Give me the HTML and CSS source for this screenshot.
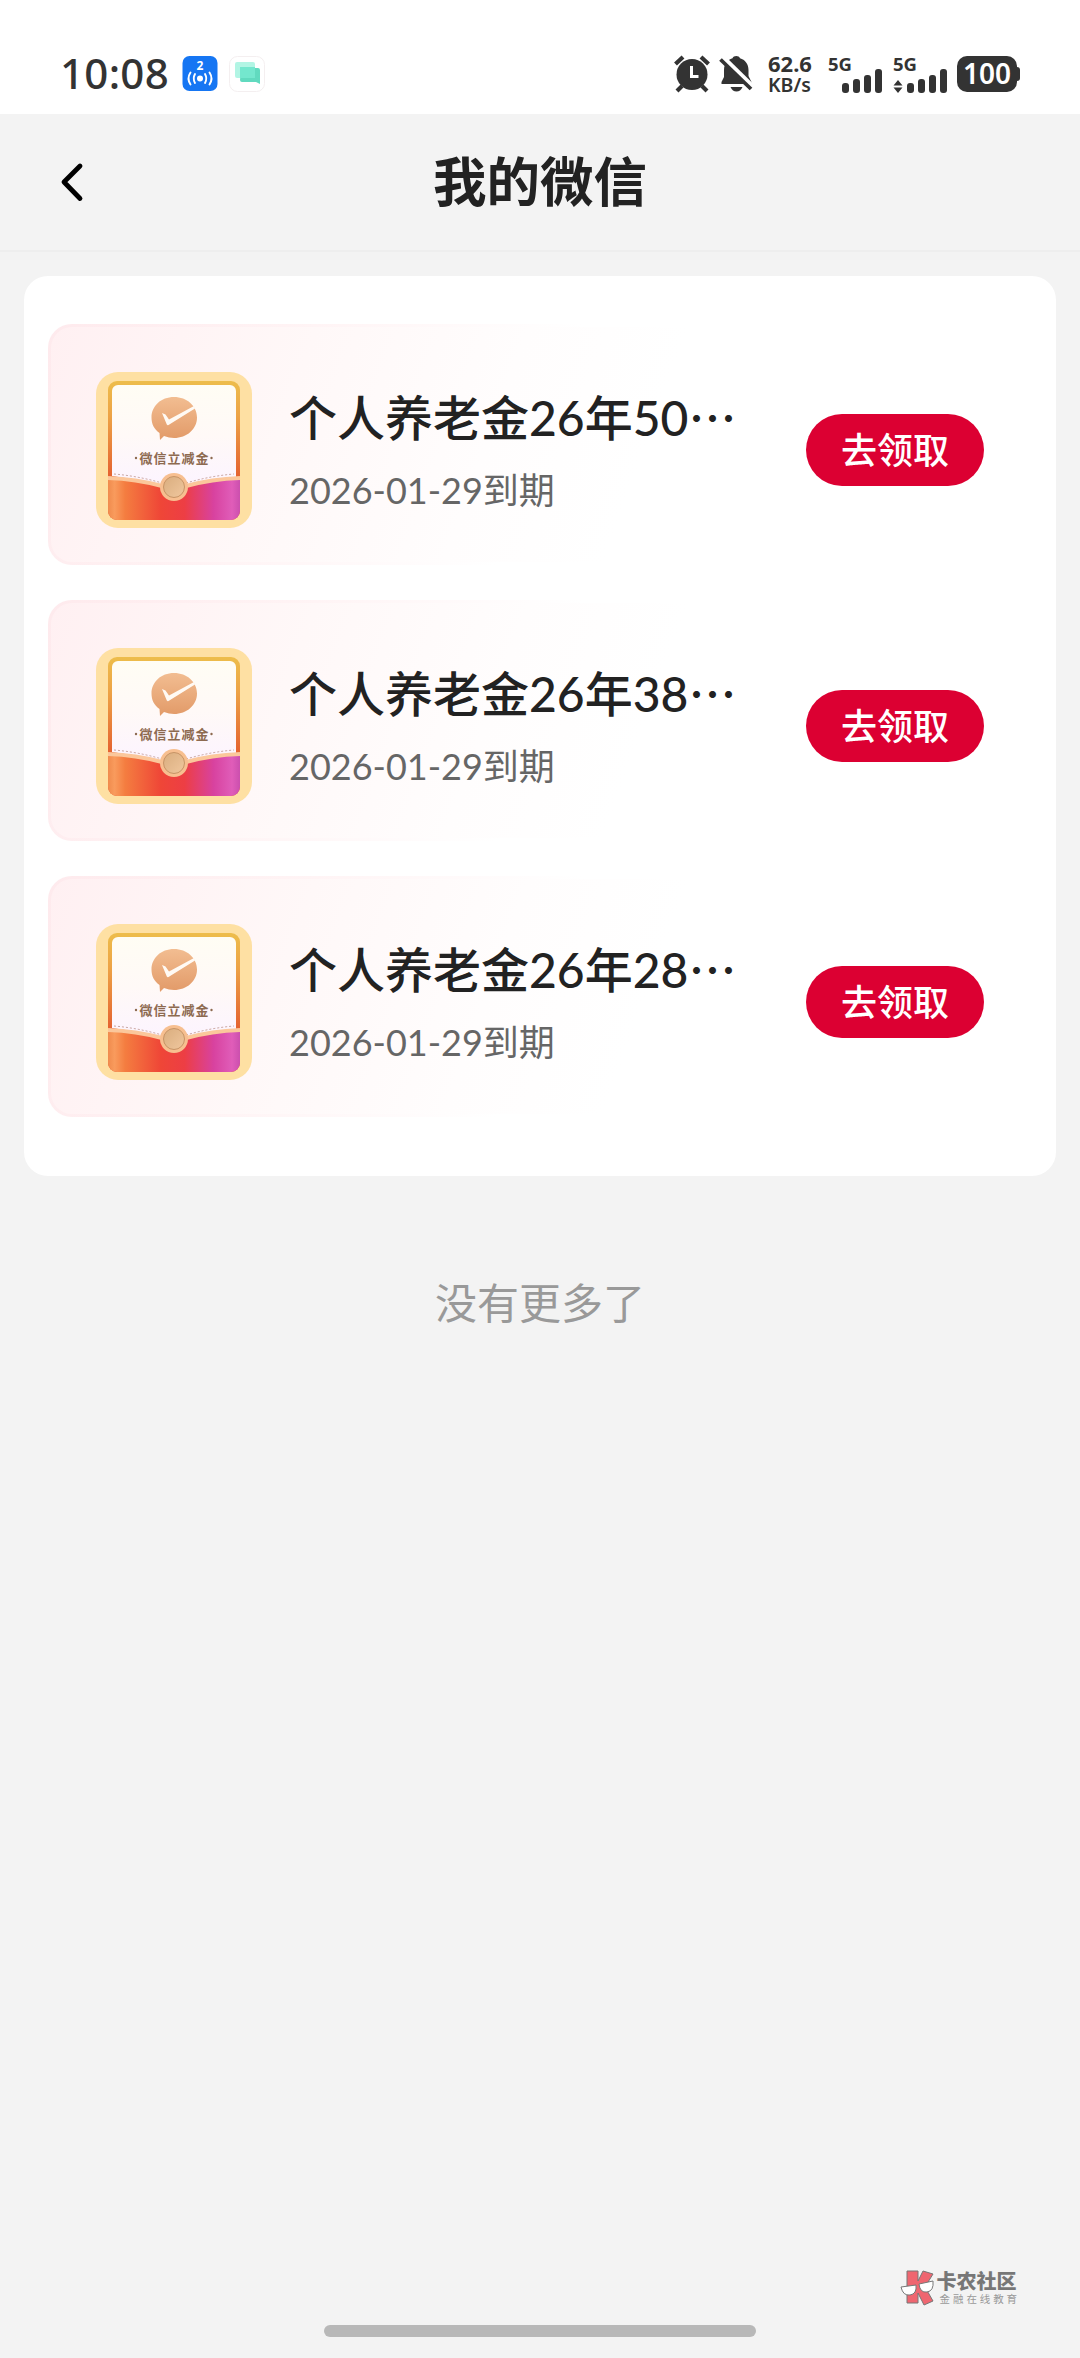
FILE: index.html
```html
<!DOCTYPE html>
<html lang="zh-CN">
<head>
<meta charset="utf-8">
<title>我的微信</title>
<link rel="stylesheet" href="styles.css">
</head>
<body>
<svg class="defs" width="0" height="0" aria-hidden="true">
  <defs>
    <linearGradient id="frame" x1="0" y1="0" x2="0" y2="1">
      <stop offset="0" stop-color="#edbd4b"/><stop offset=".25" stop-color="#eda346"/><stop offset=".7" stop-color="#e4602f"/><stop offset="1" stop-color="#e4502f"/>
    </linearGradient>
    <linearGradient id="paper" x1="0" y1="0" x2="0" y2="1">
      <stop offset="0" stop-color="#fffdf4"/><stop offset=".5" stop-color="#fff9f7"/><stop offset="1" stop-color="#fcf4ff"/>
    </linearGradient>
    <linearGradient id="pocket" x1="0" y1="0" x2="1" y2="0">
      <stop offset="0" stop-color="#f08b4d"/><stop offset=".05" stop-color="#f99b5d"/><stop offset=".13" stop-color="#f47d40"/><stop offset=".4" stop-color="#ef4637"/><stop offset=".58" stop-color="#ed3e44"/><stop offset=".8" stop-color="#d8429f"/><stop offset=".94" stop-color="#e05db9"/><stop offset="1" stop-color="#cb4fae"/>
    </linearGradient>
    <linearGradient id="bubble" x1="0" y1="0" x2="0" y2="1">
      <stop offset="0" stop-color="#f2bd91"/><stop offset="1" stop-color="#e29a68"/>
    </linearGradient>
    <linearGradient id="seal" x1="0" y1="0" x2="1" y2="1">
      <stop offset="0" stop-color="#d9ad7e"/><stop offset="1" stop-color="#f0c79e"/>
    </linearGradient>
    <symbol id="coupon" viewBox="0 0 156 156">
      <rect width="156" height="156" rx="22" fill="#fee0a3"/>
      <rect x="12" y="9" width="132" height="139" rx="9" fill="url(#frame)"/>
      <path d="M12 107H144V139a9 9 0 0 1-9 9H21a9 9 0 0 1-9-9z" fill="url(#pocket)"/>
      <path d="M16 19a6 6 0 0 1 6-6H134a6 6 0 0 1 6 6V105Q110 109 90 114H66Q45 108 16 104z" fill="url(#paper)"/>
      <path d="M12 106Q40 107 66 114M90 114Q116 107 144 106" fill="none" stroke="#fbc79b" stroke-width="4"/>
      <path d="M18 102Q42 104 66 111M90 111Q114 104 138 102" fill="none" stroke="#b98b83" stroke-width=".8" stroke-dasharray="2 2"/>
      <path d="M78 25c13 0 23 9 23 20.500S91 66 78 66q-5 0-10-2l-4 4-.5-7C58 57 55.500 52 55.500 45.500 55.500 34 65 25 78 25z" fill="url(#bubble)"/>
      <path d="M66 41l3.500 1.500 3.500 5L98 34l1 2.500L72.500 53q-1 .5-1.700-.6z" fill="#fffaf4"/>
      <circle cx="78" cy="115" r="14" fill="#f7bf90"/>
      <circle cx="78" cy="115" r="10.500" fill="url(#seal)" stroke="#c79466" stroke-width="1"/>
      <circle cx="40" cy="86" r="1.200" fill="#8d6a50"/><circle cx="115.500" cy="86" r="1.200" fill="#8d6a50"/>
      <text x="43.500" y="90.500" textLength="69" class="coupon-label">微信立减金</text>
    </symbol>
  </defs>
</svg>

<div class="status">
  <div class="status-left">
    <span class="clock">10:08</span>
    <svg class="app-icon" viewBox="0 0 36 36" width="36" height="36">
      <rect x=".5" width="35" height="35" rx="7" fill="#1676f3"/>
      <text x="18" y="13.500" text-anchor="middle" class="badge-num">2</text>
      <circle cx="18" cy="22.500" r="3" fill="#fff"/>
      <g fill="none" stroke="#fff" stroke-width="1.900" stroke-linecap="round">
        <path d="M13 18q-2.500 4.500 0 9M23 18q2.500 4.500 0 9M8.500 16.500q-4 6 0 12M27.500 16.500q4 6 0 12"/>
      </g>
    </svg>
    <svg class="app-icon chat" viewBox="0 0 36 36" width="36" height="36">
      <rect x=".5" y=".5" width="35" height="35" rx="8" fill="#fff" stroke="#f4eff0"/>
      <path d="M12 12h17q2 0 2 2v14l-4-2H13q-2 0-2-2z" fill="#61dabf"/>
      <rect x="6" y="6" width="20" height="16" rx="2" fill="#a4f3df" opacity=".85"/>
      <rect x="11" y="11" width="15" height="11" fill="#74e7ce"/>
    </svg>
  </div>
  <div class="status-right">
    <svg class="alarm" viewBox="0 0 38 40" width="38" height="40">
      <g fill="none" stroke="#333" stroke-width="4.200">
        <path d="M2.500 10L10 3M28 3l7.500 7"/><path d="M9 32l-5 5M29 32l5 5"/>
      </g>
      <circle cx="19" cy="20.500" r="15.500" fill="#333"/>
      <path d="M18.500 12v10.500h7" fill="none" stroke="#fff" stroke-width="3"/>
    </svg>
    <svg class="bell" viewBox="0 0 34 38" width="34" height="38">
      <path d="M2.500 29V27l2.500-5V15C5 8 10 4 13.500 3.200 14.500.3 20 .3 21 3.200 26 4.500 29.500 9 29.500 15v6l3 6v2z" fill="#333"/>
      <path d="M11.500 32H23.500Q21.500 36.500 17.500 36.500T11.500 32z" fill="#333"/>
      <path d="M4 2.500L34 32" stroke="#fff" stroke-width="5"/>
      <path d="M1.500 4.500L32 34" stroke="#333" stroke-width="3.800"/>
    </svg>
    <div class="speed"><span>62.6</span><span>KB/s</span></div>
    <div class="signal">
      <span class="net">5G</span>
      <svg viewBox="0 0 56 27" width="56" height="27" fill="#333">
        <rect x="14" y="15" width="7" height="10" rx="3"/><rect x="25" y="11" width="7" height="14" rx="3"/><rect x="36" y="7" width="7" height="18" rx="3"/><rect x="47" y="1" width="7" height="24" rx="3"/>
      </svg>
    </div>
    <div class="signal second">
      <span class="net">5G</span>
      <svg viewBox="0 0 56 27" width="56" height="27" fill="#333">
        <path d="M.5 17.500L5 12l4.500 5.500zM.5 19.500L5 25l4.500-5.500z"/>
        <rect x="14" y="15" width="7" height="10" rx="3"/><rect x="25" y="11" width="7" height="14" rx="3"/><rect x="36" y="7" width="7" height="18" rx="3"/><rect x="47" y="1" width="7" height="24" rx="3"/>
      </svg>
    </div>
    <div class="battery">100</div>
  </div>
</div>

<header class="nav">
  <svg class="back" viewBox="0 0 30 44" width="30" height="44"><path d="M21 6L5 22 21 38.500" fill="none" stroke="#000" stroke-width="4.800" stroke-linecap="round" stroke-linejoin="round"/></svg>
  <h1>我的微信</h1>
</header>

<main>
  <section class="list">
    <article class="item">
      <svg class="thumb" width="156" height="156"><use href="#coupon"/></svg>
      <div class="info"><h2>个人养老金26年50<span class="more">…</span></h2><p>2026-01-29到期</p></div>
      <button class="claim">去领取</button>
    </article>
    <article class="item">
      <svg class="thumb" width="156" height="156"><use href="#coupon"/></svg>
      <div class="info"><h2>个人养老金26年38<span class="more">…</span></h2><p>2026-01-29到期</p></div>
      <button class="claim">去领取</button>
    </article>
    <article class="item">
      <svg class="thumb" width="156" height="156"><use href="#coupon"/></svg>
      <div class="info"><h2>个人养老金26年28<span class="more">…</span></h2><p>2026-01-29到期</p></div>
      <button class="claim">去领取</button>
    </article>
  </section>
  <p class="end">没有更多了</p>
</main>

<footer>
  <div class="brand">
    <svg viewBox="0 0 36 36" width="36" height="36">
      <path d="M7 1h11v10L23 1l10 3-8 13 8 14-9 4-6-12v10H7z" fill="#ef6670" stroke="#777" stroke-width="1"/>
      <path d="M1 17l15-2q1 9-6 10T1 17zM19 14l14-3q1 10-6 11t-8-8z" fill="#fff" stroke="#777" stroke-width="1"/>
    </svg>
    <div class="brand-text"><strong>卡农社区</strong><span>金融在线教育</span></div>
  </div>
  <div class="handle"></div>
</footer>
</body>
</html>
```

FILE: styles.css
```css
* { box-sizing: border-box; margin: 0; padding: 0; }

body {
  display: flex;
  flex-direction: column;
  width: 1080px;
  height: 2358px;
  background: #f3f3f3;
  font-family: Lato, "Noto Sans CJK SC", sans-serif;
  color: #222;
  overflow: hidden;
}

svg { display: block; flex: none; }
.defs { position: absolute; }

.coupon-label {
  font: 700 13px "Noto Sans CJK SC", sans-serif;
  fill: #8d6a50;
}

/* status bar */
.status {
  display: flex;
  justify-content: space-between;
  height: 114px;
  padding: 0 60px 0 60px;
  background: #fff;
  color: #333;
}
.status-left, .status-right { display: flex; align-items: flex-start; }
.clock {
  width: 109px;
  margin-right: 13px;
  padding-top: 47px;
  font: 500 42px/52px "Noto Sans", sans-serif;
  letter-spacing: .3px;
  white-space: nowrap;
}
.app-icon { margin-top: 56px; }
.chat { margin-left: 11px; }
.badge-num { font: 700 12px "Open Sans", sans-serif; fill: #fff; }
.alarm { margin-top: 54px; }
.bell { margin: 55px 0 0 8px; }
.speed {
  display: flex;
  flex-direction: column;
  width: 46px;
  margin: 52px 0 0 15px;
  font: 700 22px/22px "Noto Sans", sans-serif;
}
.speed span:last-child { font-size: 19.5px; font-weight: 600; }
.signal { width: 56px; margin: 56px 0 0 14px; }
.signal.second { margin-left: 9px; }
.net {
  display: block;
  height: 12px;
  font: 700 18.5px/16px "Noto Sans", sans-serif;
}
.battery {
  position: relative;
  width: 60px;
  height: 36px;
  margin: 56px 3px 0 8px;
  border-radius: 10px;
  background: #333;
  color: #fff;
  font: 600 28px/35px "Noto Sans", sans-serif;
  text-align: center;
}
.battery::after {
  content: "";
  position: absolute;
  right: -3px;
  top: 11px;
  width: 4px;
  height: 14px;
  border-radius: 0 3px 3px 0;
  background: #333;
}

/* navigation */
.nav {
  display: grid;
  grid-template-columns: 90px 1fr 90px;
  align-items: center;
  height: 138px;
  padding-bottom: 2px;
  border-bottom: 2px solid #eee;
}
.back { margin: 2px 0 0 59px; }
.nav h1 {
  font-size: 53.500px;
  font-weight: 700;
  line-height: 72px;
  text-align: center;
}

/* coupon list */
main { padding: 24px 24px 0; }
.list {
  display: flex;
  flex-direction: column;
  gap: 36px;
  height: 900px;
  padding: 48px 24px 60px;
  border-radius: 24px;
  background: #fff;
}
.item {
  display: flex;
  align-items: center;
  height: 241px;
  margin-bottom: -1px;
  padding: 0 45px;
  border: 3px solid transparent;
  border-radius: 24px;
  background:
    linear-gradient(110deg, #fff0f2 0, #fff8f8 25%, #fffdfd 45%, #fff 60%) padding-box,
    linear-gradient(110deg, #feeaed 0, #fff4f5 25%, #fff 50%) border-box;
}
.thumb { margin-top: 11px; }
.info { flex: 1; margin: 7px 0 0 37px; }
.info h2 {
  font-size: 48px;
  font-weight: 500;
  line-height: 72px;
  white-space: nowrap;
}
.more { font-family: "Noto Sans CJK SC", sans-serif; }
.info p {
  font-size: 36px;
  line-height: 54px;
  margin-top: 9px;
  color: #666;
}
.claim {
  width: 178px;
  height: 72px;
  margin-top: 11px;
  padding-bottom: 4px;
  border: 0;
  border-radius: 36px;
  background: #dc0032;
  color: #fff;
  font: 500 36px/68px "Noto Sans CJK SC", sans-serif;
}
.end {
  margin-top: 96px;
  font-size: 42px;
  line-height: 62px;
  text-align: center;
  color: #999;
}

/* page foot */
footer {
  display: flex;
  flex-direction: column;
  margin-top: auto;
  padding-bottom: 21px;
}
.brand {
  display: flex;
  gap: 1px;
  margin: 0 60px 19px auto;
}
.brand-text { display: flex; flex-direction: column; color: #777; white-space: nowrap; }
.brand-text strong { font: 900 20px/22px "Noto Sans CJK SC", sans-serif; }
.brand-text span {
  margin-left: 3px;
  font: 400 10.500px/13px "Noto Sans CJK SC", sans-serif;
  letter-spacing: 2.900px;
  color: #999;
}
.handle {
  width: 432px;
  height: 12px;
  margin: 0 auto;
  border-radius: 6px;
  background: #b8b8b8;
}
```
